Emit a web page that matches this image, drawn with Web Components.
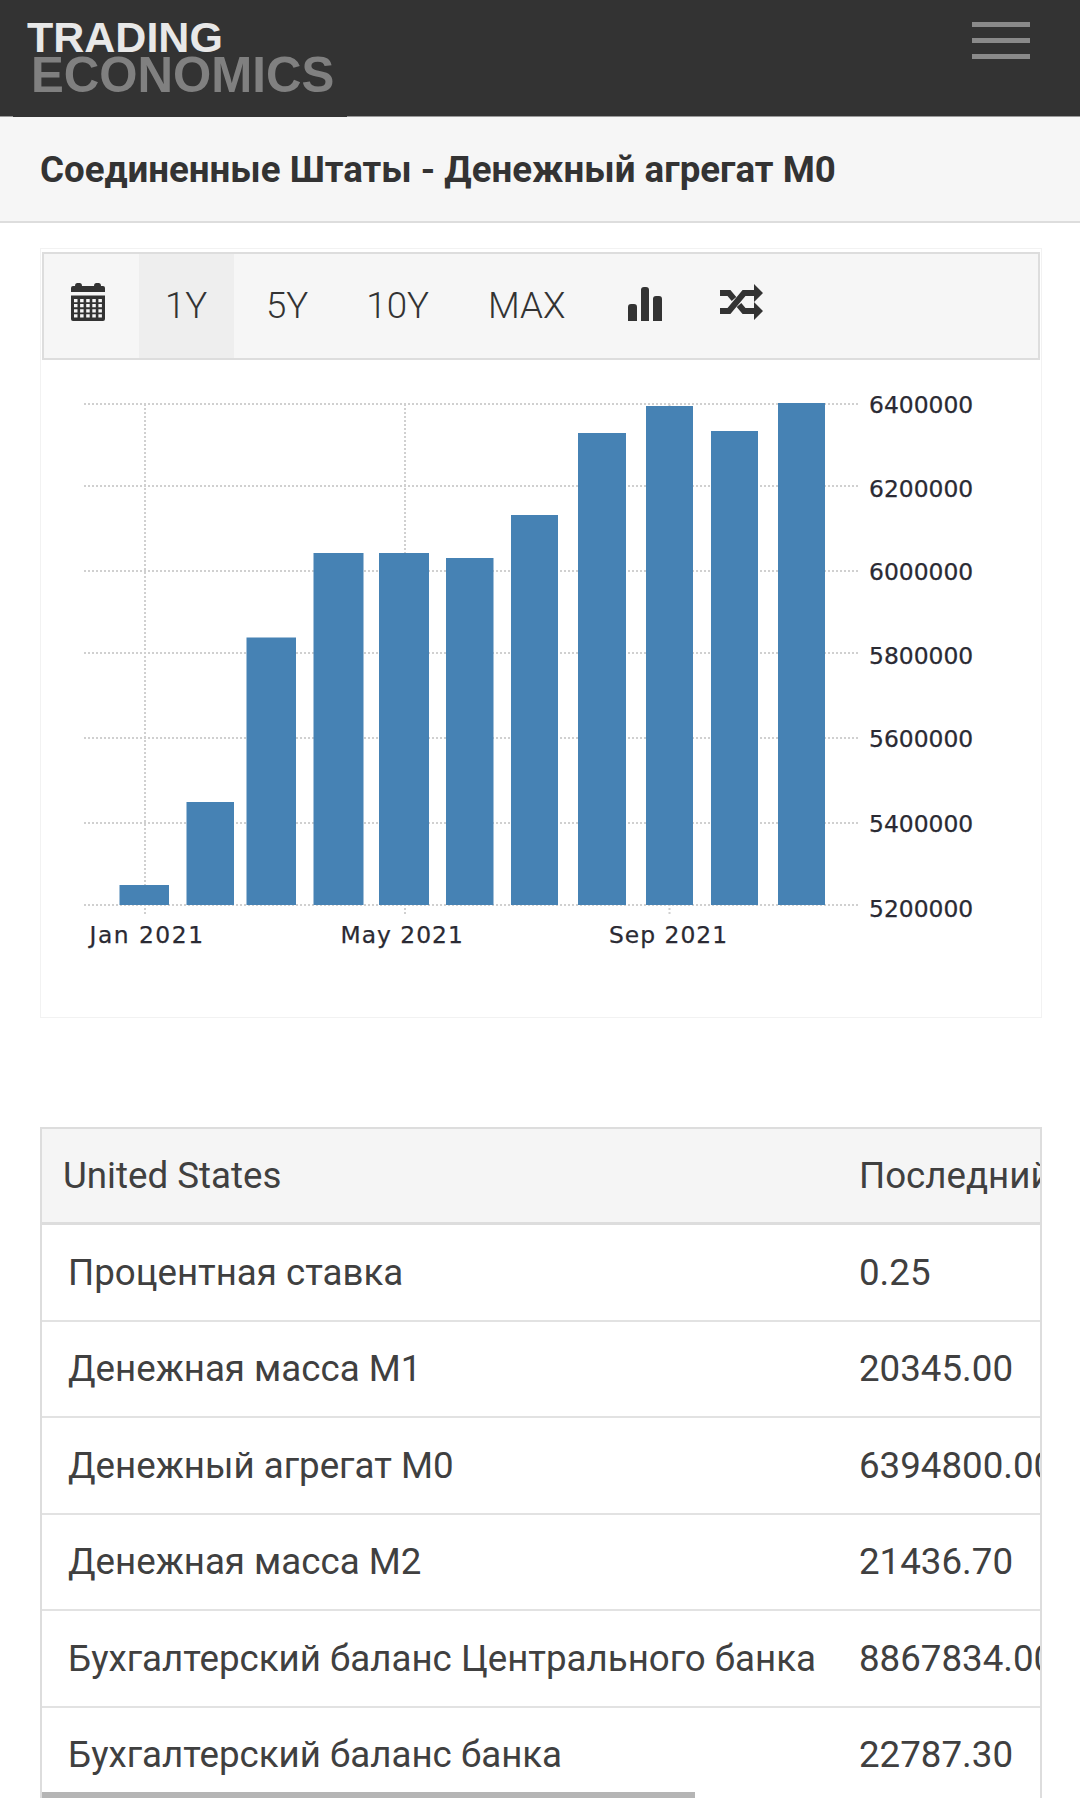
<!DOCTYPE html>
<html lang="ru"><head><meta charset="utf-8"><title>Денежный агрегат M0</title>
<style>
html,body{margin:0;padding:0;background:#fff}
body{width:1080px;height:1798px;overflow:hidden;display:flex;flex-direction:column;font-family:Roboto,"Noto Sans",sans-serif;color:#333}
</style></head><body>
<te-header></te-header>
<te-title>Соединенные Штаты - Денежный агрегат M0</te-title>
<te-chart-card>
  <te-toolbar></te-toolbar>
  <te-chart></te-chart>
</te-chart-card>
<te-table></te-table>
<script>
const mk=(name,html,extra)=>{customElements.define(name,class extends HTMLElement{
  constructor(){super();this.attachShadow({mode:'open'}).innerHTML=html;if(extra)extra(this.shadowRoot)}
})};
mk('te-header',`<style>
:host{display:flex;justify-content:space-between;flex:none;height:116px;background:#333;border-bottom:1px solid #999}
.logo{flex:none;display:flex;flex-direction:column;margin-left:13px;width:334px;height:118px;padding:20px 0 0 14px;background:#333;font:700 43px/35px "Liberation Sans",Arial,sans-serif;box-sizing:border-box;white-space:nowrap}
.t{color:#e8e8e8}
.e{margin:2px 0 0 4px;color:#808080;font-size:49.200px}
.menu{flex:none;margin:22px 50px 0 0;width:58px;display:flex;flex-direction:column;gap:11px}
.menu i{display:block;height:5px;background:#8a8a8a}
</style><div class="logo"><span class="t">TRADING</span><span class="e">ECONOMICS</span></div><div class="menu"><i></i><i></i><i></i></div>`);
mk('te-title',`<style>
:host{display:flex;align-items:center;flex:none;box-sizing:border-box;height:106px;padding:2px 0 0 40px;background:#f6f6f6;border-bottom:2px solid #ddd;font:700 36.700px/1.2 Roboto,sans-serif;color:#333}
</style><slot></slot>`);
mk('te-chart-card',`<style>
:host{display:block;flex:none;box-sizing:border-box;width:1002px;height:770px;margin:25px 0 0 40px;padding:3px 1px 0 1px;border:1px solid #f2f2f2}
</style><slot></slot>`);
mk('te-toolbar',`<style>
:host{display:flex;align-items:center;box-sizing:border-box;height:108px;background:#f6f6f6;border:2px solid #ddd;font:300 36.700px/1 Roboto,sans-serif;color:#333}
.b{display:flex;align-items:center;height:100%;padding:1px 30px 0;box-sizing:border-box}
.cal{padding:0 34px 8px 27px;width:95px}
.on{background:#eee;padding:1px 0 0 26px;width:95px}
.five{padding-left:32px;padding-right:28px}
.ten{padding-right:29px}
svg{display:block}
</style>
<div class="b cal"><svg width="34" height="38" viewBox="0 0 34 38"><path fill="#333" d="M4 3q0-3 2.500-3h2q2.500 0 2.500 3h12q0-3 2.500-3h2q2.500 0 2.500 3h2q2 0 2 2v4H0V5q0-2 2-2z"/><path fill="#333" fill-rule="evenodd" d="M0 12.500h34V36q0 2-2 2H2q-2 0-2-2z${(()=>{let s='';for(let r=0;r<4;r++)for(let c=0;c<5;c++){const x=3+c*6.1,y=16+r*5.1;s+=`M${x} ${y}h3.500v3.200h-3.500z`}return s})()}"/></svg></div>
<div class="b on">1Y</div><div class="b five">5Y</div><div class="b ten">10Y</div><div class="b">MAX</div>
<div class="b" style="padding:0 29px 4px 32px"><svg width="34" height="34" viewBox="0 0 34 34"><path fill="#333" d="M0 34V20q0-3 3-3h3q3 0 3 3v14zM13 34V3q0-3 3-3h2q3 0 3 3v31zM25 34V12q0-3 3-3h3q3 0 3 3v22z"/></svg></div>
<div class="b" style="padding:0 0 8px 29px"><svg width="43" height="36" viewBox="0 0 43 36"><g fill="none" stroke="#333" stroke-width="6"><path d="M0 27H9L24 9H35"/><path d="M0 9H9L14 15"/><path d="M19 21L24 27H35"/></g><path fill="#333" d="M34 0L43 9L34 18ZM34 18L43 27L34 36Z"/></svg></div>`);
(()=>{
 const bars=[[119.5,169,885],[186.5,234,802],[246.500,296,637.500],[313.500,363.500,553],[379,429,553],[446,493.500,558],[511,558,515],[578,626,433],[646,693,406],[711,758,431],[778,825,403]];
 const ys=[404,486,571,653,738,823,905],off=[0,2,0,2,0,0,3],vals=[6400000,6200000,6000000,5800000,5600000,5400000,5200000];
 const ox=42,oy=360;
 let g='';
 ys.forEach((y,i)=>{g+=`<line x1="84" x2="860" y1="${y}" y2="${y}" class="grid"/><text x="869" y="${y+8.5+off[i]}" class="ly">${vals[i]}</text>`});
 [145,405,669.500].forEach(x=>{g+=`<line x1="${x}" x2="${x}" y1="404" y2="915" class="grid"/>`});
 bars.forEach(b=>{g+=`<rect x="${b[0]}" y="${b[2]}" width="${b[1]-b[0]}" height="${905-b[2]}" fill="#4682b4"/>`});
 [['Jan 2021',89.500,1.5],['May 2021',340.500,1],['Sep 2021',609,1]].forEach(l=>{g+=`<text x="${l[1]}" y="943" class="lx" style="letter-spacing:${l[2]}px">${l[0]}</text>`});
 mk('te-chart',`<style>
 :host{display:block;height:655px}
 svg{display:block;overflow:visible}
 .grid{stroke:#d0d0d0;stroke-width:2;stroke-dasharray:2 2}
 text{font-family:"DejaVu Sans",Verdana,sans-serif;fill:#2a2a33;stroke:#2a2a33;stroke-width:.25px}
 .ly{font-size:23.400px}
 .lx{font-size:23.400px}
 </style><svg width="998" height="655" viewBox="${ox} ${oy} 998 655">${g}</svg>`);
})();
(()=>{
 const rows=[['Процентная ставка','0.25'],['Денежная масса M1','20345.00'],['Денежный агрегат M0','6394800.00'],['Денежная масса M2','21436.70'],['Бухгалтерский баланс Центрального банка','8867834.00'],['Бухгалтерский баланс банка','22787.30']];
 mk('te-table',`<style>
 :host{display:block;flex:none;position:relative;box-sizing:border-box;width:1002px;height:671px;margin:109px 0 0 40px;border:2px solid #ddd;border-bottom:0;overflow:hidden;font:400 36.700px/1.2 Roboto,sans-serif;color:#404040}
 .r{display:flex;align-items:center;box-sizing:border-box;height:96.500px;padding-top:1px;border-bottom:2px solid #e2e2e2;white-space:nowrap}
 .h{background:#f5f5f5;height:96px;border-bottom:3px solid #ddd}
 .a{flex:none;width:817px;box-sizing:border-box;padding-left:26px}
 .h .a{padding-left:21px}
 .b{flex:none}
 .bar{position:absolute;left:0;bottom:0;width:653px;height:6px;background:#b5b5b5}
 </style><div class="r h"><div class="a">United States</div><div class="b">Последний</div></div>
 ${rows.map(r=>`<div class="r"><div class="a">${r[0]}</div><div class="b">${r[1]}</div></div>`).join('')}<div class="bar"></div>`);
})();
</script>
</body></html>
